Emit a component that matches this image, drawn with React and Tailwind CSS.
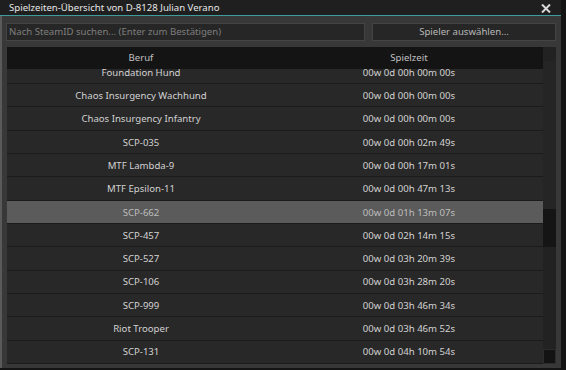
import React from "react";

const rows = [
  ["Foundation Hund", "00w 0d 00h 00m 00s"],
  ["Chaos Insurgency Wachhund", "00w 0d 00h 00m 00s"],
  ["Chaos Insurgency Infantry", "00w 0d 00h 00m 00s"],
  ["SCP-035", "00w 0d 00h 02m 49s"],
  ["MTF Lambda-9", "00w 0d 00h 17m 01s"],
  ["MTF Epsilon-11", "00w 0d 00h 47m 13s"],
  ["SCP-662", "00w 0d 01h 13m 07s"],
  ["SCP-457", "00w 0d 02h 14m 15s"],
  ["SCP-527", "00w 0d 03h 20m 39s"],
  ["SCP-106", "00w 0d 03h 28m 20s"],
  ["SCP-999", "00w 0d 03h 46m 34s"],
  ["Riot Trooper", "00w 0d 03h 46m 52s"],
  ["SCP-131", "00w 0d 04h 10m 54s"],
];

export default function App() {
  return (
    <div className="w-[566px] h-[370px] bg-[#141414] overflow-hidden font-['Noto_Sans',sans-serif] text-[9.6px] leading-none">
      <div className="w-[561px] h-[368px] flex flex-col bg-[#383838]">
        <div className="h-[15px] bg-[#1f1f1f] flex items-center justify-between pl-[9px] pr-[10px] text-[#e6e6e6]">
          <span>Spielzeiten-Übersicht von D-8128 Julian Verano</span>
          <svg width="10" height="9" viewBox="0 0 10 9" className="mt-px">
            <path d="M1 0.5 L9 8.5 M9 0.5 L1 8.5" stroke="#d8d8d8" strokeWidth="2" />
          </svg>
        </div>
        <div className="h-px bg-[#3f9c9c]" />
        <div className="flex-1 flex flex-col border-l-2 border-[#5a5a5a] pt-[7px] pl-[4px] pr-[5px]">
          <div className="flex gap-[7px] h-[18px]">
            <div className="w-[359px] bg-[#262626] border border-[#444] flex items-center pl-[2px] text-[#7e7e7e]">
              Nach SteamID suchen... (Enter zum Bestätigen)
            </div>
            <div className="w-[184px] bg-[#262626] border border-[#444] flex items-center justify-center text-[#b8b8b8]">
              Spieler auswählen...
            </div>
          </div>
          <div className="mt-[6px] ml-px w-[549px] h-[317px] flex flex-col bg-[#222]">
            <div className="h-[22px] shrink-0 bg-[#141414] flex w-[536px] text-[#c0c0c0]">
              <div className="w-[268px] flex items-center justify-center">Beruf</div>
              <div className="w-[268px] flex items-center justify-center">Spielzeit</div>
            </div>
            <div className="flex flex-1 min-h-0">
              <div className="w-[536px] overflow-hidden">
                <div className="-mt-[8.33px]">
                  {rows.map(([a, b], i) => (
                    <div
                      key={i}
                      className={`h-[23.333px] grid grid-cols-2 border-b border-[#1b1b1b] pt-px ${
                        a === "SCP-662" ? "bg-[#5b5b5b] text-[#bdbdbd]" : "bg-[#282828] text-[#d2d2d2]"
                      }`}
                    >
                      <div className="flex items-center justify-center">{a}</div>
                      <div className="flex items-center justify-center">{b}</div>
                    </div>
                  ))}
                </div>
              </div>
              <div className="w-[13px] -mt-[8px] flex flex-col bg-[#232323] relative">
                <div className="h-[148px] bg-[#252525]" />
                <div className="h-[38px] bg-[#151515]" />
                <div className="flex-1 bg-[#222]" />
                <div className="h-[15px] bg-[#131313] border border-[#2c2c2c]" />
              </div>
            </div>
          </div>
        </div>
      </div>
    </div>
  );
}
